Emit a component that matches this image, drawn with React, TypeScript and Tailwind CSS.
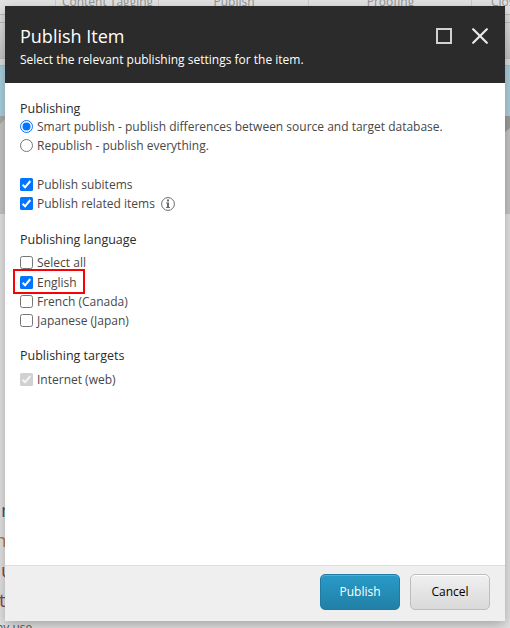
import type { ReactNode } from "react";

function Check({ on = false, disabled = false }: { on?: boolean; disabled?: boolean }) {
  const fill = on ? (disabled ? "#d1d1d1" : "#0075ff") : "#ffffff";
  return (
    <svg className="block h-[13px] w-[13px] shrink-0" viewBox="0 0 13 13">
      {on ? (
        <rect width="13" height="13" rx="1.5" fill={fill} />
      ) : (
        <rect x="0.5" y="0.5" width="12" height="12" rx="2" fill={fill} stroke="#767676" />
      )}
      {on && <path d="M2.6 6.8 5.1 9.3 10.3 3" fill="none" stroke={disabled ? "#f4f4f4" : "#fff"} strokeWidth="2.1" />}
    </svg>
  );
}

function Radio({ on = false }: { on?: boolean }) {
  return (
    <svg className="block h-[13px] w-[13px] shrink-0" viewBox="0 0 13 13">
      <circle cx="6.5" cy="6.5" r="6" fill="#fff" stroke={on ? "#0075ff" : "#767676"} />
      {on && <circle cx="6.5" cy="6.5" r="4" fill="#0075ff" />}
    </svg>
  );
}

function Row({ control, label, children }: { control: ReactNode; label: string; children?: ReactNode }) {
  return (
    <div className="flex h-[19px] items-center">
      {control}
      <span className="ml-1 text-[12px] leading-[19px] whitespace-nowrap text-[#474747]">{label}</span>
      {children}
    </div>
  );
}

function Heading({ text }: { text: string }) {
  return <h2 className="h-4 text-[12.5px] leading-[18px] whitespace-nowrap text-[#2b2b2b]">{text}</h2>;
}

function Backdrop() {
  return (
    <div className="flex h-full flex-col">
      <div className="flex h-[15px] shrink-0 border-b border-[#bcbcbc] bg-[#e3e3e3] text-center text-[12px] leading-[13px] text-[#929292]">
        <div className="w-14 border-r border-[#cdcdcd]" />
        <div className="-mt-[5px] w-[103px] border-r border-[#cdcdcd] pl-px whitespace-nowrap">Content Tagging</div>
        <div className="-mt-[5px] w-[150px] border-r border-[#cdcdcd] pl-px">Publish</div>
        <div className="-mt-[5px] w-[163px] border-r border-[#cdcdcd] pl-px">Proofing</div>
        <div className="-mt-[5px] w-[38px] overflow-hidden pl-[19px] text-left">Close</div>
      </div>
      <div className="h-2 shrink-0 border-b border-[#bcbcbc] bg-[#dedede]" />
      <div className="h-[35px] shrink-0 bg-gradient-to-b from-[#dedede] to-[#c5c5c5]" />
      <div className="h-2 shrink-0 border-y border-[#bdbdbd] bg-[#dedede]" />
      <div className="h-[50px] shrink-0 bg-[#abd0de]" />
      <div className="flex h-[98px] shrink-0 justify-between bg-[#c5c5c5]">
        <svg className="h-[17px] w-[6px]" viewBox="0 0 6 17"><path d="M0 0H6V2L0 8Z" fill="#aaa" /></svg>
        <svg className="h-[17px] w-[6px]" viewBox="0 0 6 17"><path d="M0 0H6V12L0 17Z" fill="#9d9d9d" /></svg>
      </div>
      <div className="flex flex-1 flex-col bg-[#e3e3e3] pt-[281px] text-[19px] leading-[30px]">
        <span className="ml-px text-[#315b87]">m</span>
        <span className="-ml-[5px] text-[#b77a31]">n</span>
        <span className="ml-px text-[#884b52]">u</span>
        <span className="-ml-px text-[#884b52]">t</span>
        <span className="-ml-1 text-[12px] leading-[25px] text-[#555]">ny use</span>
      </div>
    </div>
  );
}

export default function App() {
  return (
    <main className="relative h-[628px] w-[510px] overflow-hidden bg-[#e3e3e3] font-['Open_Sans',sans-serif]">
      <Backdrop />
      <section className="absolute top-[6px] left-[5px] flex h-[615px] w-[500px] flex-col bg-white shadow-[0_4px_12px_rgba(0,0,0,0.28)]">
        <header className="flex h-[77px] shrink-0 justify-between bg-[#2b2b2b] pr-[17px] pl-[15px] text-white">
          <div className="pt-[18px]">
            <h1 className="text-[18px] leading-6 whitespace-nowrap">Publish Item</h1>
            <p className="mt-[3px] text-[12px] leading-[18px] whitespace-nowrap">Select the relevant publishing settings for the item.</p>
          </div>
          <div className="flex gap-5 pt-[22px]">
            <svg className="h-4 w-4" viewBox="0 0 16 16"><rect x="1" y="1" width="14" height="14" fill="none" stroke="#d2d2d2" strokeWidth="2" /></svg>
            <svg className="h-4 w-4" viewBox="0 0 16 16"><path d="M1.2 1.2 14.8 14.8M14.8 1.2 1.2 14.8" stroke="#e8e8e8" strokeWidth="2.2" strokeLinecap="round" /></svg>
          </div>
        </header>
        <div className="flex flex-1 flex-col pt-[17px] pl-[15px]">
          <Heading text="Publishing" />
          <div className="mt-px">
            <Row control={<Radio on />} label="Smart publish - publish differences between source and target database." />
            <Row control={<Radio />} label="Republish - publish everything." />
          </div>
          <div className="mt-5 mb-[18px]">
            <Row control={<Check on />} label="Publish subitems" />
            <Row control={<Check on />} label="Publish related items">
              <svg className="ml-[6px] h-[14px] w-[14px]" viewBox="0 0 14 14">
                <circle cx="7" cy="7" r="6.4" fill="none" stroke="#6b6b6b" />
                <path d="M6 2.5h2v2H6zM5 5.5h3V10h1v1H5v-1h1V6.5H5z" fill="#6b6b6b" />
              </svg>
            </Row>
          </div>
          <Heading text="Publishing language" />
          <div className="mt-[6px] mb-[17px]">
            <Row control={<Check />} label="Select all" />
            <div className="relative mt-px">
              <Row control={<Check on />} label="English" />
              <div className="absolute -top-1 -left-[7px] h-[25px] w-[72px] border-2 border-[#fb0007]" />
            </div>
            <Row control={<Check />} label="French (Canada)" />
            <Row control={<Check />} label="Japanese (Japan)" />
          </div>
          <Heading text="Publishing targets" />
          <div className="mt-[7px]">
            <Row control={<Check on disabled />} label="Internet (web)" />
          </div>
        </div>
        <footer className="flex h-14 shrink-0 justify-end gap-[10px] border-t border-[#dedede] bg-[#efefef] pt-2 pr-[15px]">
          <button className="h-9 w-20 rounded-[5px] border border-[#1f7ba2] bg-gradient-to-b from-[#289bc8] to-[#2180a6] text-[12px] text-white shadow-[inset_0_1px_0_#53b0d5]">Publish</button>
          <button className="h-9 w-20 rounded-[5px] border border-[#bdbdbd] bg-gradient-to-b from-[#f0f0f0] to-[#d9d9d9] text-[12px] text-black shadow-[inset_0_1px_0_#fff]">Cancel</button>
        </footer>
      </section>
    </main>
  );
}
